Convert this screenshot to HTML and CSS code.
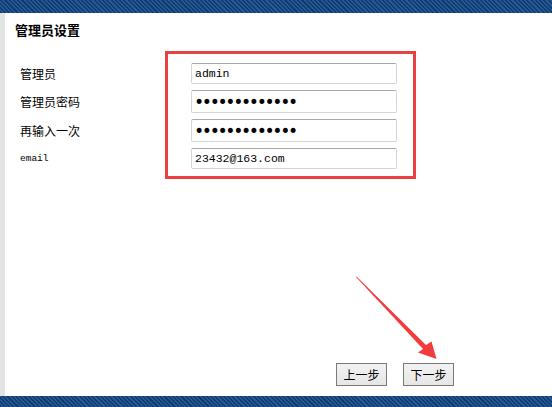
FILE: index.html
```html
<!DOCTYPE html>
<html lang="zh-CN">
  <head>
    <meta charset="UTF-8" />
    <meta name="viewport" content="width=device-width, initial-scale=1.0" />
    <title>管理员设置</title>
    <link rel="stylesheet" href="styles.css">
  </head>
  <body>
    <div class="page">
      <div class="bar"></div>
      <div class="main">
        <div class="strip"></div>
        <div class="content">
          <h2 class="title">管理员设置</h2>
          <div class="form">
            <div class="labels">
              <label class="row r1" for="user">管理员</label>
              <label class="row r2" for="pwd">管理员密码</label>
              <label class="row r3" for="pwd2">再输入一次</label>
              <label class="row r4 latin" for="email">email</label>
            </div>
            <div class="fields">
              <input class="r1" type="text" id="user" value="admin" />
              <input class="r2" type="password" id="pwd" value="1234567890123" />
              <input class="r3" type="password" id="pwd2" value="1234567890123" />
              <input class="r4" type="text" id="email" value="23432@163.com" />
            </div>
          </div>
          <div class="actions">
            <button class="btn">上一步</button>
            <button class="btn">下一步</button>
          </div>
        </div>
      </div>
      <div class="bar bottom"></div>

      <!-- annotation arrow pointing at the next button -->
      <svg class="arrow" width="552" height="407" viewBox="0 0 552 407">
        <polygon points="355.5,276.5 357,277 426,345 431.5,341.5 436.5,359 418,352.5 423,349" fill="#f23c3c" />
      </svg>
    </div>
  </body>
</html>
```

FILE: styles.css
```css
body {
  margin: 0;
  font-family: "Noto Sans CJK SC", "DejaVu Sans", sans-serif;
  font-size: 12px;
  color: #000;
  background: #fff;
}
.page {
  position: relative;
  width: 552px;
  height: 407px;
  display: flex;
  flex-direction: column;
  overflow: hidden;
}
.bar {
  height: 13px;
  background: repeating-linear-gradient(45deg, #103b6c 0 1.5px, #265a96 1.5px 3px);
}
.bar.bottom {
  height: 11px;
}
.main {
  flex: 1;
  display: flex;
}
.strip {
  width: 5px;
  background: #e4e4e4;
}
.content {
  flex: 1;
  display: flex;
  flex-direction: column;
  padding: 8px 0 0 10px;
}
.title {
  margin: 0;
  font-size: 13px;
  font-weight: bold;
  line-height: 17px;
}
.form {
  display: flex;
  margin-top: 13px;
}
.labels {
  width: 145px;
  padding: 12px 0 0 5px;
  display: flex;
  flex-direction: column;
  gap: 6px;
}
.row {
  display: flex;
  align-items: center;
  line-height: 1;
}
.latin {
  font-family: "Liberation Mono", monospace;
  font-size: 9.5px;
}
.fields {
  border: 3px solid #e84141;
  padding: 9px 16px 7px 23px;
  display: flex;
  flex-direction: column;
  gap: 6px;
}
.fields input {
  display: block;
  width: 206px;
  box-sizing: border-box;
  margin: 0;
  padding: 0 3px;
  border: 1px solid #d5d5d5;
  border-top-color: #a8a8a8;
  border-radius: 2px;
  font-family: "Liberation Mono", monospace;
  font-size: 11.5px;
  color: #000;
  outline: none;
}
.r1 {
  height: 21px;
}
.r2,
.r3 {
  height: 23px;
}
.r4 {
  height: 21px;
}
.fields input[type="password"] {
  font-family: "DejaVu Sans Mono", monospace;
  font-size: 17px;
  letter-spacing: -2.4px;
  padding-left: 2px;
}
.actions {
  margin-top: auto;
  display: flex;
  justify-content: flex-end;
  gap: 16px;
  padding: 0 98px 10px 0;
}
.btn {
  width: 51px;
  height: 23px;
  padding: 0;
  border: 1px solid #7a7a7a;
  border-radius: 0;
  background: linear-gradient(#f2f2f2, #e6e6e6);
  font-family: "Noto Sans CJK SC", sans-serif;
  font-size: 12px;
  color: #000;
}
.arrow {
  position: absolute;
  left: 0;
  top: 0;
  pointer-events: none;
}
```
